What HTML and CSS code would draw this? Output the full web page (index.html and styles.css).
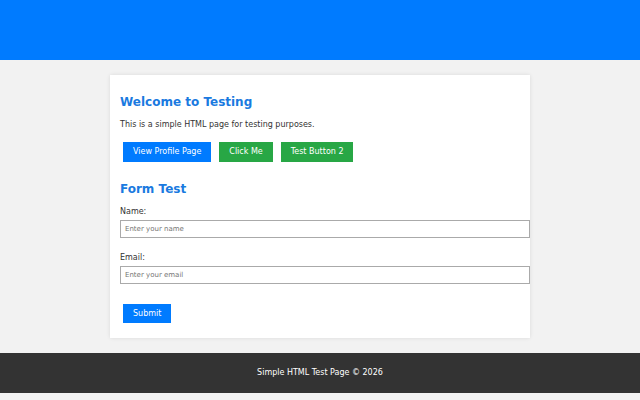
FILE: index.html
```html
<!DOCTYPE html>
<html lang="en">
<head>
  <meta charset="UTF-8" />
  <meta name="viewport" content="width=device-width, initial-scale=1.0" />
  <title>Simple HTML Test Page</title>
  <link rel="stylesheet" href="styles.css">
</head>
<body>
  <header class="top-bar"></header>
  <main class="container">
    <section class="intro">
      <h2>Welcome to Testing</h2>
      <p>This is a simple HTML page for testing purposes.</p>
      <div class="actions">
        <button class="btn">View Profile Page</button>
        <button class="btn btn-green">Click Me</button>
        <button class="btn btn-green">Test Button 2</button>
      </div>
    </section>
    <section class="form-test">
      <h2>Form Test</h2>
      <form>
        <div class="field">
          <label for="name">Name:</label>
          <input type="text" id="name" placeholder="Enter your name" />
        </div>
        <div class="field">
          <label for="email">Email:</label>
          <input type="email" id="email" placeholder="Enter your email" />
        </div>
        <button type="submit" class="btn btn-submit">Submit</button>
      </form>
    </section>
  </main>
  <footer class="footer">
    <p>Simple HTML Test Page &copy; 2026</p>
  </footer>
</body>
</html>
```

FILE: styles.css
```css
* {
  box-sizing: border-box;
  margin: 0;
  padding: 0;
}
body {
  background-color: #f2f2f2;
  color: #333;
  font-family: "DejaVu Sans", sans-serif;
  font-size: 8px;
}
.top-bar {
  background-color: #007bff;
  height: 60px;
}
.container {
  width: 420px;
  margin: 15px auto 15px;
  padding: 20px 10px 15px;
  background-color: #fff;
  box-shadow: 0 0 4px rgba(0, 0, 0, 0.1);
}
h2 {
  color: #1a7ae0;
  font-size: 12px;
}
.intro p {
  margin-top: 11px;
}
.actions {
  display: flex;
  gap: 8px;
  margin-top: 13px;
  padding-left: 3px;
}
.btn {
  display: inline-block;
  padding: 5px 10px;
  border: none;
  background-color: #007bff;
  color: #fff;
  font-family: inherit;
  font-size: 8px;
  line-height: 9.5px;
}
.btn-green {
  background-color: #28a745;
}
.form-test {
  margin-top: 20px;
}
.field {
  margin-top: 11px;
}
.field + .field {
  margin-top: 15px;
}
label {
  display: block;
  margin-bottom: 4px;
}
input {
  display: block;
  width: 410px;
  padding: 4px;
  border: 1px solid #aaa;
  font-family: inherit;
  font-size: 7px;
}
.btn-submit {
  margin: 20px 0 0 3px;
}
.footer {
  background-color: #333;
  color: #fff;
  text-align: center;
  padding: 15px 0;
  margin-bottom: 7px;
  line-height: 10px;
}
```
